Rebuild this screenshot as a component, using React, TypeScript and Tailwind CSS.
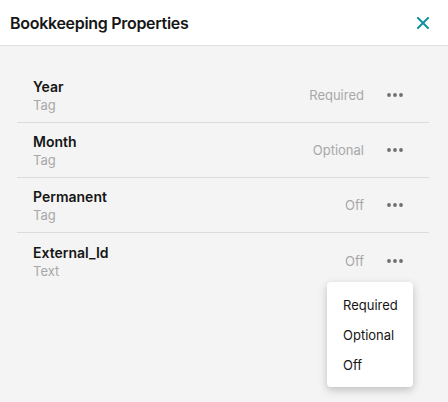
import React from "react";

const FIELDS = [
  { name: "Year", kind: "Tag", status: "Required" },
  { name: "Month", kind: "Tag", status: "Optional" },
  { name: "Permanent", kind: "Tag", status: "Off" },
  { name: "External_Id", kind: "Text", status: "Off" },
];

const MENU = ["Required", "Optional", "Off"];

function Dots() {
  return (
    <svg width="16" height="4" viewBox="0 0 16 4" aria-hidden>
      <circle cx="2" cy="2" r="1.9" fill="#6f6f6f" />
      <circle cx="8" cy="2" r="1.9" fill="#6f6f6f" />
      <circle cx="14" cy="2" r="1.9" fill="#6f6f6f" />
    </svg>
  );
}

export default function App() {
  return (
    <div
      className="relative flex h-[402px] w-[448px] flex-col overflow-hidden bg-[#f4f4f4] text-[#161616]"
      style={{ fontFamily: "Inter, 'Noto Sans', sans-serif" }}
    >
      <header className="flex h-[46px] shrink-0 items-center justify-between border-b border-[#e0e0e0] bg-white pl-[10px] pr-[17px]">
        <h1 className="text-[16px] font-semibold tracking-[-0.3px]">Bookkeeping Properties</h1>
        <button type="button" aria-label="Close" className="flex h-4 w-4 items-center justify-center">
          <svg width="12" height="12" viewBox="0 0 12 12" aria-hidden>
            <path d="M1 1 L11 11 M11 1 L1 11" stroke="#1192a3" strokeWidth="2" strokeLinecap="square" />
          </svg>
        </button>
      </header>

      <ul className="ml-[17px] mr-[19px] mt-[22px] flex flex-col">
        {FIELDS.map((f, i) => (
          <li
            key={f.name}
            className={
              "flex h-[55px] items-center pl-4 pr-[18px] " +
              (i < FIELDS.length - 1 ? "border-b border-[#dcdcdc]" : "")
            }
          >
            <div className="flex flex-1 flex-col pt-[2px]">
              <span className="text-[14px] font-semibold leading-[18px]">{f.name}</span>
              <span className="text-[13px] leading-[18px] text-[#a8a8a8]">{f.kind}</span>
            </div>
            <span className="pt-[2px] text-[13px] text-[#a8a8a8]">{f.status}</span>
            <button type="button" className="ml-[15px] flex h-8 w-8 items-center justify-center" aria-label="More">
              <Dots />
            </button>
          </li>
        ))}
      </ul>

      <div className="absolute left-[327px] top-[282px] flex w-[86px] flex-col rounded bg-white pb-[6px] pt-[9px] shadow-[0_3px_8px_rgba(0,0,0,0.22)]">
        {MENU.map((m) => (
          <div key={m} className="flex h-[30px] items-center pl-4 text-[13px] text-[#161616]">
            {m}
          </div>
        ))}
      </div>
    </div>
  );
}
